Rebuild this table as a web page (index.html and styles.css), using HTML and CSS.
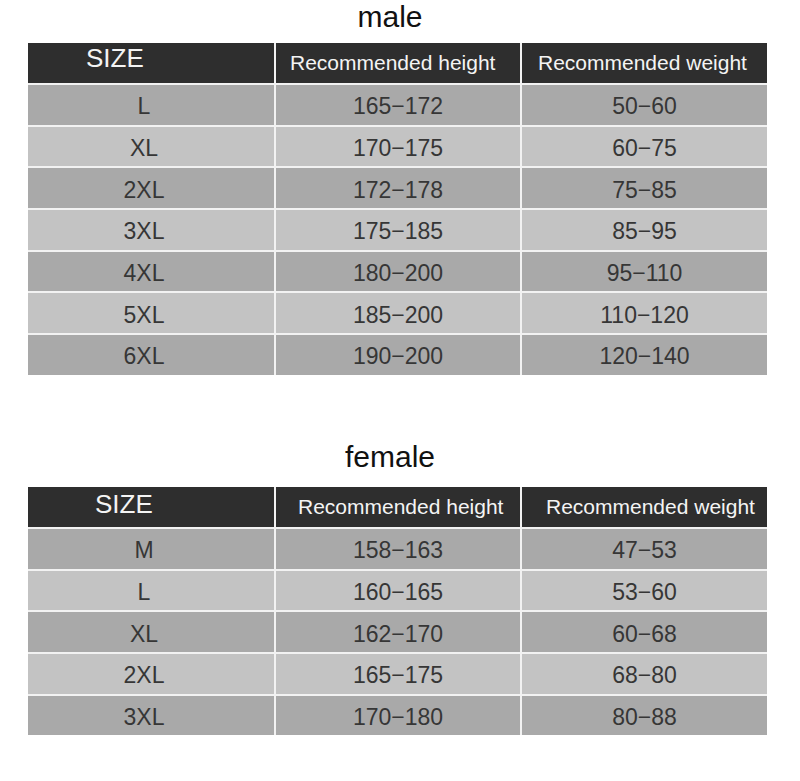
FILE: index.html
```html
<!DOCTYPE html>
<html lang="en">
<head>
<meta charset="utf-8">
<title>Size chart</title>
<link rel="stylesheet" href="styles.css">
</head>
<body>
<section class="chart chart-male">
  <h2 class="chart-title">male</h2>
  <div class="table">
    <div class="cell hd hd-size">SIZE</div>
    <div class="cell hd hd-h">Recommended height</div>
    <div class="cell hd hd-w">Recommended weight</div>

    <div class="cell dark sz">L</div><div class="cell dark">165−172</div><div class="cell dark">50−60</div>
    <div class="cell light sz">XL</div><div class="cell light">170−175</div><div class="cell light">60−75</div>
    <div class="cell dark sz">2XL</div><div class="cell dark">172−178</div><div class="cell dark">75−85</div>
    <div class="cell light sz">3XL</div><div class="cell light">175−185</div><div class="cell light">85−95</div>
    <div class="cell dark sz">4XL</div><div class="cell dark">180−200</div><div class="cell dark">95−110</div>
    <div class="cell light sz">5XL</div><div class="cell light">185−200</div><div class="cell light">110−120</div>
    <div class="cell dark sz">6XL</div><div class="cell dark">190−200</div><div class="cell dark">120−140</div>
  </div>
</section>

<section class="chart chart-female">
  <h2 class="chart-title">female</h2>
  <div class="table">
    <div class="cell hd hd-size">SIZE</div>
    <div class="cell hd hd-h">Recommended height</div>
    <div class="cell hd hd-w">Recommended weight</div>

    <div class="cell dark sz">M</div><div class="cell dark">158−163</div><div class="cell dark">47−53</div>
    <div class="cell light sz">L</div><div class="cell light">160−165</div><div class="cell light">53−60</div>
    <div class="cell dark sz">XL</div><div class="cell dark">162−170</div><div class="cell dark">60−68</div>
    <div class="cell light sz">2XL</div><div class="cell light">165−175</div><div class="cell light">68−80</div>
    <div class="cell dark sz">3XL</div><div class="cell dark">170−180</div><div class="cell dark">80−88</div>
  </div>
</section>
</body>
</html>
```

FILE: styles.css
```css
html, body {
  margin: 0;
  padding: 0;
  background: #ffffff;
}

body {
  font-family: "Liberation Sans", Arial, sans-serif;
  width: 800px;
}

.chart-title {
  margin: 0;
  font-size: 30px;
  font-weight: normal;
  color: #111111;
  text-align: center;
  line-height: 34px;
  width: 780px;
}

.chart-male .chart-title {
  margin-bottom: 9px;
}

.chart-female {
  margin-top: 65px;
}

.chart-female .chart-title {
  margin-bottom: 13px;
}

.table {
  margin-left: 28px;
  width: 739px;
  display: grid;
  grid-template-columns: 246px 244px 245px;
  grid-template-rows: 40px;
  grid-auto-rows: 39.7px;
  gap: 2px;
  background: #f2f2f2;
}

.cell {
  display: flex;
  align-items: center;
  justify-content: center;
  font-size: 23px;
  color: #363636;
  padding-top: 4px;
  box-sizing: border-box;
}

.cell.sz {
  padding-right: 14px;
}

.dark {
  background: #a9a9a9;
}

.light {
  background: #c3c3c3;
}

.hd {
  background: #2e2e2e;
  color: #f4f4f4;
  font-size: 21px;
  justify-content: flex-start;
  padding-top: 0;
}

.hd-size {
  font-size: 26px;
  padding-left: 58px;
  padding-bottom: 9px;
}

.hd-h {
  padding-left: 14px;
}

.hd-w {
  padding-left: 16px;
}

.chart-female .hd-size {
  padding-left: 67px;
  padding-bottom: 4px;
}

.chart-female .hd-h {
  padding-left: 22px;
}

.chart-female .hd-w {
  padding-left: 24px;
}
```
